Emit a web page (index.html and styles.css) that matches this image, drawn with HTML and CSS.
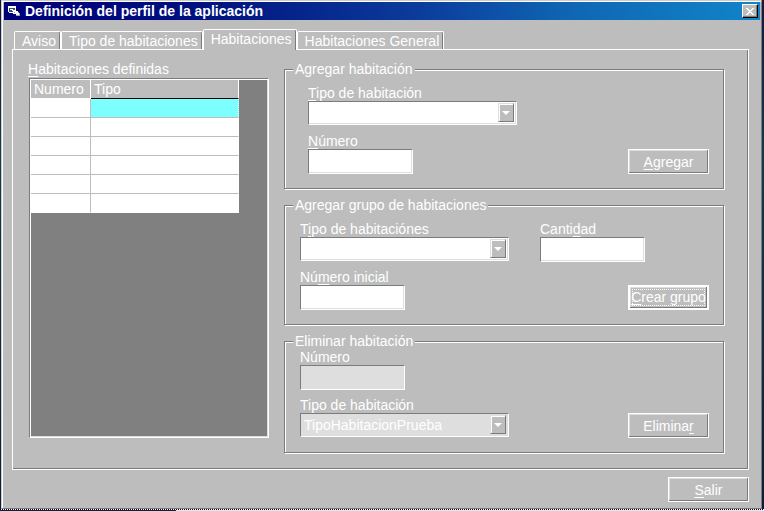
FILE: index.html
```html
<!DOCTYPE html>
<html lang="es">
<head>
<meta charset="utf-8">
<title>Definición del perfil de la aplicación</title>
<link rel="stylesheet" href="styles.css">
</head>
<body>
<main class="window">
  <header class="titlebar">
    <svg class="app-icon" width="14" height="12" viewBox="0 0 14 12" shape-rendering="crispEdges" aria-hidden="true">
      <path d="M0 1h8v2H0zM0 3h1v4H0zM1 7h4v1H1zM7 3h1v2H7z" fill="#fff"/>
      <path d="M1 3h6v4H1z" fill="#35536e"/>
      <path d="M2 4h3v1H2zM4 5h4v1H4zM5 6h5v3H5zM8 8h3v2H8z" fill="#fff"/>
      <path d="M6 7h1v1H6zM10 7h1v1h-1zM11 8h1v3h-1zM8 10h3v1H8z" fill="#9aa6b8"/>
    </svg>
    <h1 class="title">Definición del perfil de la aplicación</h1>
    <button class="close" type="button" aria-label="Cerrar">
      <svg width="8" height="7" viewBox="0 0 8 7" shape-rendering="crispEdges" aria-hidden="true">
        <path d="M0 0h2v1H0zM6 0h2v1H6zM1 1h2v1H1zM5 1h2v1H5zM2 2h4v1H2zM3 3h2v1H3zM2 4h4v1H2zM1 5h2v1H1zM5 5h2v1H5zM0 6h2v1H0zM6 6h2v1H6z" fill="#fff"/>
      </svg>
    </button>
  </header>

  <div class="content">
    <nav class="tabs" role="tablist">
      <button class="tab" type="button" role="tab">Aviso</button>
      <button class="tab" type="button" role="tab">Tipo de habitaciones</button>
      <button class="tab active" type="button" role="tab" aria-selected="true">Habitaciones</button>
      <button class="tab" type="button" role="tab">Habitaciones General</button>
    </nav>

    <div class="panel" role="tabpanel">
      <section class="defined">
        <h2 class="label" id="defined"><u>H</u>abitaciones definidas</h2>
        <div class="list sunken">
          <table class="rooms" aria-labelledby="defined">
            <thead><tr><th class="num">Numero</th><th>Tipo</th></tr></thead>
            <tbody>
              <tr><td></td><td class="selected"></td></tr>
              <tr><td></td><td></td></tr>
              <tr><td></td><td></td></tr>
              <tr><td></td><td></td></tr>
              <tr><td></td><td></td></tr>
              <tr><td></td><td></td></tr>
            </tbody>
          </table>
        </div>
      </section>

      <form class="groups">
        <fieldset class="group indented">
          <legend>Agregar habitación</legend>
          <div class="field">
            <label for="add-type"><u>T</u>ipo de habitación</label>
            <span class="combo sunken"><select id="add-type"><option></option></select><span class="arrow"></span></span>
          </div>
          <div class="line">
            <div class="field">
              <label for="add-number"><u>N</u>úmero</label>
              <input class="text sunken" id="add-number" type="text">
            </div>
            <button class="btn" type="button"><u>A</u>gregar</button>
          </div>
        </fieldset>

        <fieldset class="group">
          <legend>Agregar grupo de habitaciones</legend>
          <div class="line pair">
            <div class="field">
              <label for="group-type">T<u>i</u>po de habitaciónes</label>
              <span class="combo sunken"><select id="group-type"><option></option></select><span class="arrow"></span></span>
            </div>
            <div class="field">
              <label for="count">Canti<u>d</u>ad</label>
              <input class="text sunken" id="count" type="text">
            </div>
          </div>
          <div class="line">
            <div class="field">
              <label for="first">Nú<u>m</u>ero inicial</label>
              <input class="text sunken" id="first" type="text">
            </div>
            <button class="btn default" type="button"><span class="focus"><span><u>C</u>rear grupo</span></span></button>
          </div>
        </fieldset>

        <fieldset class="group compact">
          <legend>Eliminar habitación</legend>
          <div class="field">
            <label for="del-number">Número</label>
            <input class="text sunken" id="del-number" type="text" disabled>
          </div>
          <div class="line">
            <div class="field">
              <label for="del-type">Tipo de habitación</label>
              <span class="combo sunken"><select id="del-type" disabled><option>TipoHabitacionPrueba</option></select><span class="arrow"></span></span>
            </div>
            <button class="btn" type="button">Elimina<u>r</u></button>
          </div>
        </fieldset>
      </form>
    </div>
  </div>

  <footer class="footer">
    <button class="btn" type="button"><u>S</u>alir</button>
  </footer>
</main>
</body>
</html>
```
FILE: styles.css
```css
:root {
  --face: #bdbdbd;
  --shade: #7b7b7b;
  --light: #dedede;
}

* { box-sizing: border-box; }

body {
  margin: 0;
  min-height: 100vh;
  padding: 0 2px 2px 1px;
  background:
    repeating-linear-gradient(to right, #000 0 1px, #fff 1px 2px) 0 calc(100% - 1px) / 100% 1px no-repeat,
    linear-gradient(to right, #18204a 23%, #e6e6f4 23%) 0 100% / 100% 1px no-repeat,
    linear-gradient(to bottom, #18183c, #123a4c 30%, #101c38);
  color: #fff;
  font: 14px/16px "Liberation Sans", Arial, sans-serif;
  display: flex;
}

button, input, select { font: inherit; color: inherit; margin: 0; }

u { text-decoration: underline; text-decoration-thickness: 1px; text-underline-offset: 2px; }

.window {
  flex: 1;
  display: flex;
  flex-direction: column;
  background: var(--face);
  border: 1px solid var(--shade);
  border-top-color: #ccc;
  border-left-color: #ccc;
  box-shadow: inset 1px 1px #fff;
  padding: 1px 0 0 2px;
}

.titlebar {
  height: 18px;
  display: flex;
  align-items: center;
  padding: 0 2px 0 4px;
  margin-right: 1px;
  background: linear-gradient(to right, #000078, #00107e 25%, #0b3c9c 55%, #0f66b4 75%, #1084ca);
}

.app-icon { flex: none; }

.title {
  flex: 1;
  margin: 0 0 0 3px;
  font-size: 14px;
  line-height: 18px;
  font-weight: bold;
  white-space: nowrap;
}

.close {
  width: 16px;
  height: 14px;
  padding: 0;
  display: grid;
  place-items: center;
  background: var(--face);
  border: 1px solid;
  border-color: #fff #000 #000 #fff;
  box-shadow: inset -1px -1px var(--shade);
}

.content {
  flex: 1;
  display: flex;
  flex-direction: column;
  padding: 9px 12px 0 8px;
}

.tabs { display: flex; align-items: flex-end; padding-left: 2px; }

.tab {
  height: 18px;
  padding: 0 4px 0 7px;
  background: var(--face);
  border: 1px solid #fff;
  border-bottom: 0;
  border-radius: 2px 2px 0 0;
  box-shadow: inset -1px 0 var(--shade);
  line-height: 16px;
  white-space: nowrap;
}

.tab.active {
  height: 21px;
  margin-bottom: -1px;
  padding-bottom: 3px;
  position: relative;
}

.panel {
  flex: 1;
  display: flex;
  gap: 15px;
  padding: 11px 24px 15px 16px;
  border: 1px solid #fff;
  box-shadow: inset -1px -1px var(--shade);
}

.defined { flex: 240; display: flex; flex-direction: column; }

.label { margin: 0 0 1px -1px; font-size: 14px; font-weight: normal; }

.sunken {
  border: 1px solid;
  border-color: var(--shade) #fff #fff var(--shade);
  border-radius: 0;
  box-shadow: inset -1px -1px var(--light);
}

.list {
  flex: 1;
  margin-bottom: 16px;
  padding: 1px;
  background: #808080;
  box-shadow: inset 1px 1px #fff, inset -1px -1px var(--light);
}

.rooms {
  width: 88%;
  border-collapse: separate;
  border-spacing: 0;
  table-layout: fixed;
  background: #fff;
}

.rooms th, .rooms td {
  height: 19px;
  padding: 0 3px;
  border-bottom: 1px solid var(--face);
  border-right: 1px solid var(--face);
  text-align: left;
  font-weight: normal;
}

.rooms th { background: var(--face); border-color: #fff; }
.rooms .num { width: 60px; }
.rooms th:last-child { border-bottom-color: #000; }
.rooms td:last-child { border-right-color: #fff; }
.rooms tr:last-child td { border-bottom-color: #fff; }
.rooms .selected { background: #7bffff; border-right: 1px dotted #000; }

.groups { flex: 440; display: flex; flex-direction: column; gap: 8px; }

.group {
  min-width: 0;
  margin: 0;
  padding: 8px 14px 14px 15px;
  border: 1px solid var(--shade);
  box-shadow: inset 1px 1px #fff, 1px 1px #fff;
}

.group.indented { padding-left: 23px; }
.group.compact { padding-top: 0; }

legend {
  margin-left: -7px;
  padding: 0 2px;
  background: var(--face);
}

.indented legend { margin-left: -15px; }

.field { display: flex; flex-direction: column; align-items: flex-start; }
.field + .line, .line + .line { margin-top: 7px; }
.line { display: flex; align-items: flex-end; justify-content: space-between; }
.pair { justify-content: flex-start; gap: 31px; }

.text {
  width: 105px;
  height: 25px;
  padding: 0 3px;
  background: #fff;
  color: #000;
}

.text:disabled { background: var(--light); }

.combo {
  display: flex;
  width: 209px;
  height: 24px;
  margin-bottom: 1px;
  padding: 1px 2px 2px 1px;
  background: #fff;
}

.combo select {
  flex: 1;
  min-width: 0;
  padding: 0 2px;
  border: 0;
  border-radius: 0;
  appearance: none;
  background: transparent;
  color: #000;
}

.combo:has(select:disabled) { background: var(--light); }
.combo select:disabled { color: #fff; opacity: 1; }

.arrow {
  width: 16px;
  display: grid;
  place-items: center;
  background: var(--face);
  border: 1px solid;
  border-color: var(--light) var(--shade) var(--shade) var(--light);
  box-shadow: inset 1px 1px #fff;
  pointer-events: none;
}

.arrow::before {
  content: "";
  border: 4px solid transparent;
  border-top-color: #fff;
  border-bottom: 0;
}

.btn {
  width: 81px;
  height: 25px;
  padding: 0;
  background: var(--face);
  border: 1px solid #fff;
  border-radius: 0;
  box-shadow: inset -1px -1px var(--shade), inset 1px 1px var(--light);
}

.btn.default {
  display: flex;
  border-width: 2px;
  padding: 2px;
}

.focus {
  flex: 1;
  min-width: 0;
  height: 17px;
  display: flex;
  justify-content: center;
  outline: 1px dotted #fff;
  outline-offset: -1px;
  white-space: nowrap;
}

.footer { display: flex; justify-content: flex-end; padding: 7px 12px 6px; }
```
